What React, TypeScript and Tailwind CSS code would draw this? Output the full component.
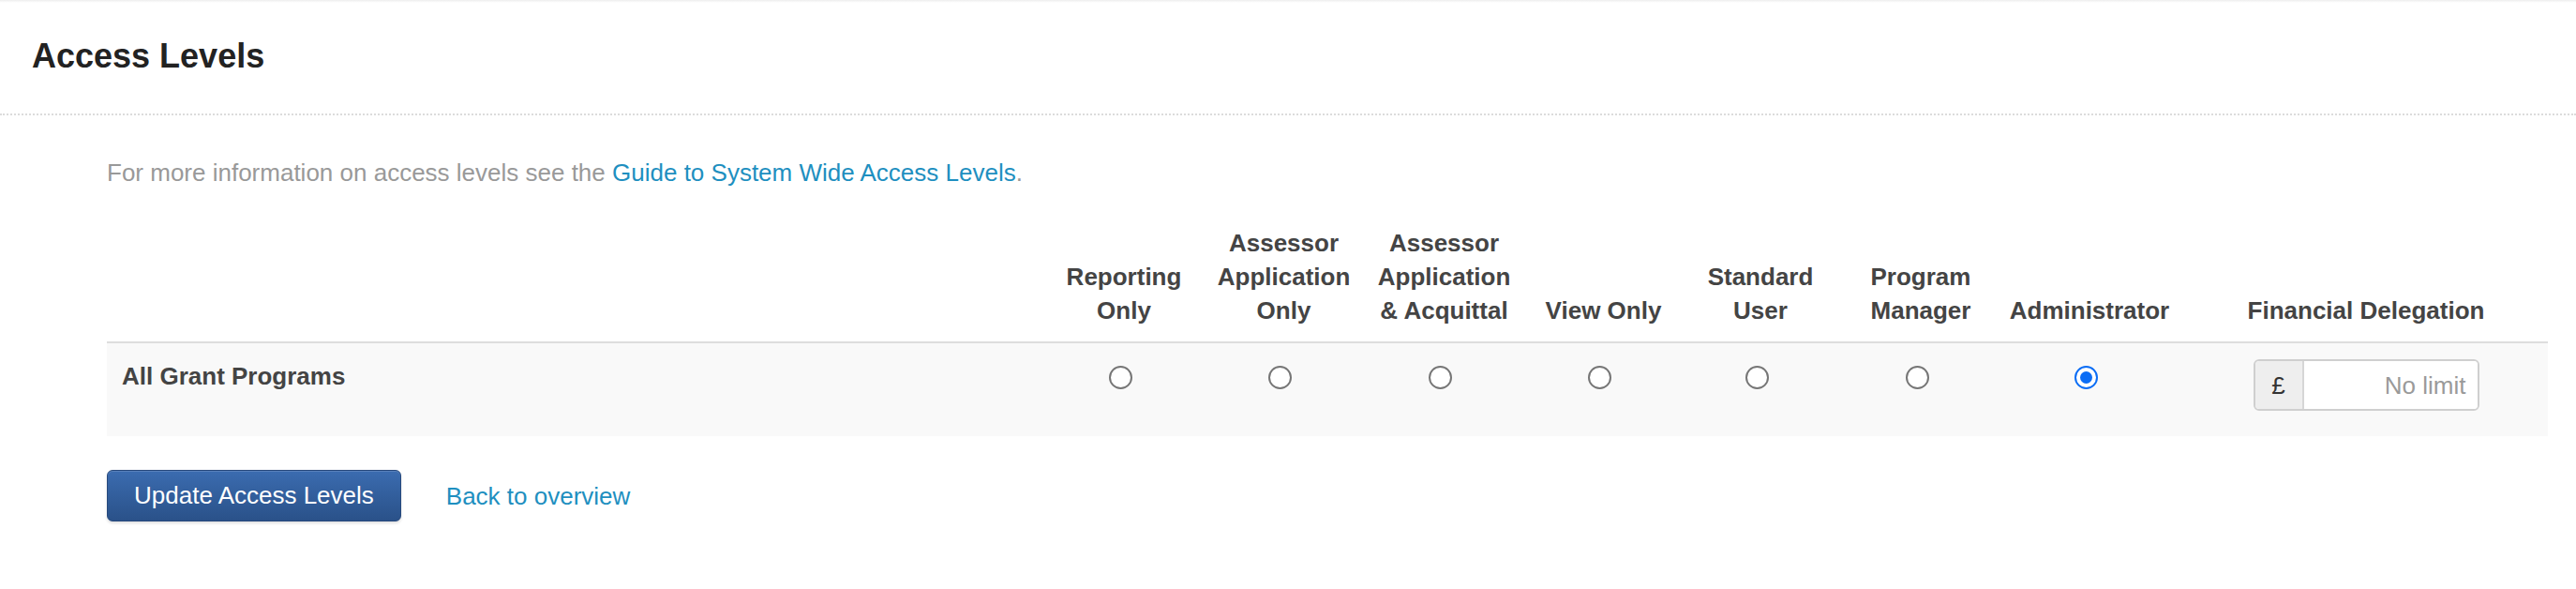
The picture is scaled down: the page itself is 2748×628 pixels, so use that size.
import { useState } from "react";

// shared column template for the header and body rows
const cols =
  "grid grid-cols-[1fr_170px_171px_171px_169px_166px_176px_184px_397px]";

const levels = [
  { id: "reporting", label: ["Reporting", "Only"] },
  { id: "assessor-app", label: ["Assessor", "Application", "Only"] },
  { id: "assessor-acq", label: ["Assessor", "Application", "& Acquittal"] },
  { id: "view", label: ["View Only"] },
  { id: "standard", label: ["Standard", "User"] },
  { id: "manager", label: ["Program", "Manager"] },
  { id: "admin", label: ["Administrator"] },
];

function Radio({ checked, onClick }: { checked: boolean; onClick: () => void }) {
  return (
    <button
      type="button"
      onClick={onClick}
      className={
        checked
          ? "mr-2 flex size-[25px] items-center justify-center rounded-full border-2 border-[#0b6df5] bg-white"
          : "mr-2 size-[25px] rounded-full border-2 border-[#767676] bg-white"
      }
    >
      {checked && <span className="size-[13px] rounded-full bg-[#0b6df5]" />}
    </button>
  );
}

function App() {
  const [level, setLevel] = useState("admin");

  return (
    <div className="min-h-screen bg-[linear-gradient(to_bottom,#eeeeee,#ffffff_3px)] font-['Liberation_Sans',Arial,sans-serif]">
      <header className="border-b-2 border-dotted border-[#dcdcdc] pt-[38px] pb-[39px] pl-[34px]">
        <h1 className="text-[36px] leading-[44px] font-bold text-[#222]">
          Access Levels
        </h1>
      </header>

      <main className="pl-[114px] pr-[30px]">
        <p className="mt-[43px] text-[26px] leading-[36px] text-[#999]">
          For more information on access levels see the{" "}
          <a href="#" className="text-[#1e8fc0]">
            Guide to System Wide Access Levels
          </a>
          .
        </p>

        <div className="mt-[39px]">
          <div
            className={`${cols} items-end border-b-2 border-[#ddd] text-[26px] leading-[36px] font-bold text-[#444]`}
          >
            <div />
            {levels.map((l) => (
              <div key={l.id} className="pb-[15px] text-center">
                {l.label.map((line) => (
                  <div key={line} className="whitespace-nowrap">
                    {line}
                  </div>
                ))}
              </div>
            ))}
            <div className="pb-[15px] pl-[9px] text-center whitespace-nowrap">
              Financial Delegation
            </div>
          </div>

          <div
            className={`${cols} items-start bg-[#f9f9f9] pt-[17px] pb-[27px] text-[26px] leading-[36px]`}
          >
            <div className="pl-4 font-bold text-[#444]">All Grant Programs</div>
            {levels.map((l) => (
              <div key={l.id} className="flex h-9 items-center justify-center pt-[2px]">
                <Radio checked={level === l.id} onClick={() => setLevel(l.id)} />
              </div>
            ))}
            <div className="flex justify-center pl-[9px]">
              <div className="flex h-[55px] w-[241px] overflow-hidden rounded-[6px] border-2 border-[#cfcfcf] bg-white">
                <span className="flex w-[52px] items-center justify-center border-r-2 border-[#d6d6d6] bg-[#eee] text-[#333]">
                  £
                </span>
                <input
                  type="text"
                  placeholder="No limit"
                  className="min-w-0 flex-1 bg-white pr-[12px] text-right text-[26px] text-[#555] outline-none placeholder:text-[#9a9a9a]"
                />
              </div>
            </div>
          </div>
        </div>

        <div className="mt-[36px] flex items-center gap-[48px]">
          <button
            type="button"
            className="h-[55px] rounded-[6px] border border-[#27497c] bg-linear-to-b from-[#3b6cb0] to-[#2a5189] px-[28px] text-[26px] text-white shadow-[inset_0_1px_0_rgba(255,255,255,0.15),0_2px_3px_rgba(0,0,0,0.12)]"
          >
            Update Access Levels
          </button>
          <a href="#" className="text-[26px] leading-[36px] text-[#1e8fc0]">
            Back to overview
          </a>
        </div>
      </main>
    </div>
  );
}

export default App;
